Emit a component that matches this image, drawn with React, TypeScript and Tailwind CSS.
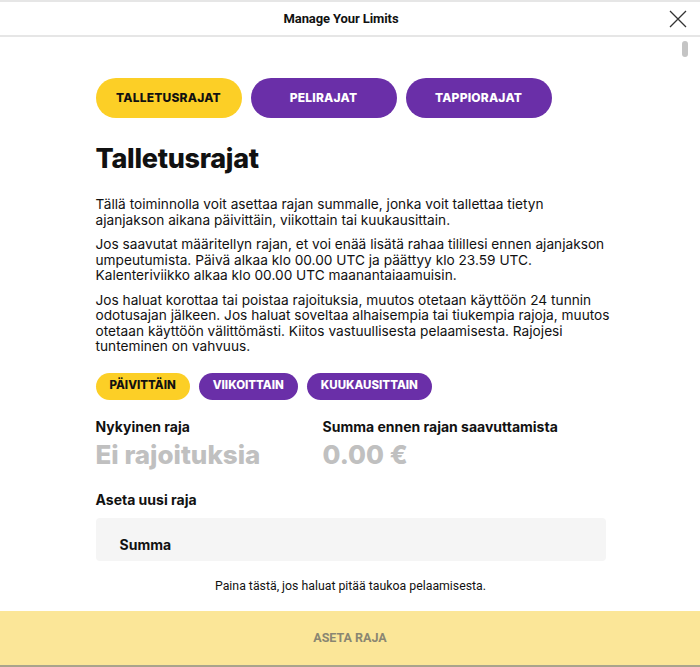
import { useState } from "react";

const tabs = ["TALLETUSRAJAT", "PELIRAJAT", "TAPPIORAJAT"];
const periods = ["PÄIVITTÄIN", "VIIKOITTAIN", "KUUKAUSITTAIN"];

const App = () => {
	const [tab, setTab] = useState(0);
	const [period, setPeriod] = useState(0);

	return (
		<div className="h-[667px] w-full flex flex-col bg-white text-[#111] font-['Inter',sans-serif] border-t-2 border-[#e6e6e6]">
			<header className="relative h-[35px] flex items-center justify-center pr-[18px] border-b-2 border-[#e6e6e6] shrink-0">
				<h1 className="text-[13px] font-bold font-['Roboto',sans-serif] tracking-[-0.1px]">
					Manage Your Limits
				</h1>
				<button className="absolute right-[12px] top-[7px] w-[20px] h-[20px]">
					<svg viewBox="0 0 20 20" className="w-full h-full" stroke="#333" strokeWidth="1.3" fill="none">
						<path d="M2 2L18 18M18 2L2 18" />
					</svg>
				</button>
			</header>

			<main className="relative flex-1 overflow-hidden">
				<div className="absolute right-[12px] top-[4px] w-[6px] h-[16px] rounded-full bg-[#c4c4c4]" />
				<div className="w-[511px] mx-auto pt-[41px] pl-px">
					<div className="flex gap-[9px]">
						{tabs.map((t, i) => (
							<button
								key={t}
								onClick={() => setTab(i)}
								className={`w-[146px] h-[40px] rounded-full text-[12px] font-extrabold tracking-[0.2px] ${
									tab === i ? "bg-[#fccf26] text-[#111]" : "bg-[#6a2fa8] text-white"
								}`}>
								{t}
							</button>
						))}
					</div>

					<h2 className="mt-[24px] text-[27px] font-extrabold leading-[34px] tracking-[-0.3px]">Talletusrajat</h2>

					<div className="mt-[21px] w-[518px] text-[13.7px] leading-[15.5px] space-y-[9px]">
						<p>
							Tällä toiminnolla voit asettaa rajan summalle, jonka voit tallettaa tietyn ajanjakson aikana päivittäin, viikottain tai kuukausittain.
						</p>
						<p>
							Jos saavutat määritellyn rajan, et voi enää lisätä rahaa tilillesi ennen ajanjakson umpeutumista. Päivä alkaa klo 00.00 UTC ja päättyy klo 23.59 UTC. Kalenteriviikko alkaa klo 00.00 UTC maanantaiaamuisin.
						</p>
						<p>
							Jos haluat korottaa tai poistaa rajoituksia, muutos otetaan käyttöön 24 tunnin odotusajan jälkeen. Jos haluat soveltaa alhaisempia tai tiukempia rajoja, muutos otetaan käyttöön välittömästi. Kiitos vastuullisesta pelaamisesta. Rajojesi tunteminen on vahvuus.
						</p>
					</div>

					<div className="mt-[18px] flex gap-[9px]">
						{periods.map((p, i) => (
							<button
								key={p}
								onClick={() => setPeriod(i)}
								className={`h-[27px] px-[14px] rounded-full text-[11.5px] font-extrabold ${
									period === i ? "bg-[#fccf26] text-[#111]" : "bg-[#6a2fa8] text-white"
								}`}>
								{p}
							</button>
						))}
					</div>

					<div className="mt-[17px] flex">
						<div className="w-[227px]">
							<div className="text-[14px] font-bold leading-[20px]">Nykyinen raja</div>
							<div className="mt-px text-[26px] font-extrabold leading-[34px] text-[#c0c0c0]">Ei rajoituksia</div>
						</div>
						<div>
							<div className="text-[14px] font-bold leading-[20px]">Summa ennen rajan saavuttamista</div>
							<div className="mt-px text-[26px] font-extrabold leading-[34px] text-[#c0c0c0]">0.00 €</div>
						</div>
					</div>

					<div className="mt-[18px] text-[14px] font-bold leading-[20px]">Aseta uusi raja</div>

					<div className="mt-[8px] h-[43px] rounded-[4px] bg-[#f5f5f5] px-[24px] pt-[17px]">
						<div className="text-[14px] font-bold leading-[20px]">Summa</div>
					</div>

					<p className="mt-[16px] text-center text-[12.3px] font-['Roboto',sans-serif]">
						Paina tästä, jos haluat pitää taukoa pelaamisesta.
					</p>
				</div>
			</main>

			<footer className="h-[56px] shrink-0 bg-[#fbe698] flex items-center justify-center border-b-2 border-[#a8a48c]">
				<span className="text-[12.5px] font-bold font-['Roboto',sans-serif] text-[#8a8672]">ASETA RAJA</span>
			</footer>
		</div>
	);
};

export default App;
